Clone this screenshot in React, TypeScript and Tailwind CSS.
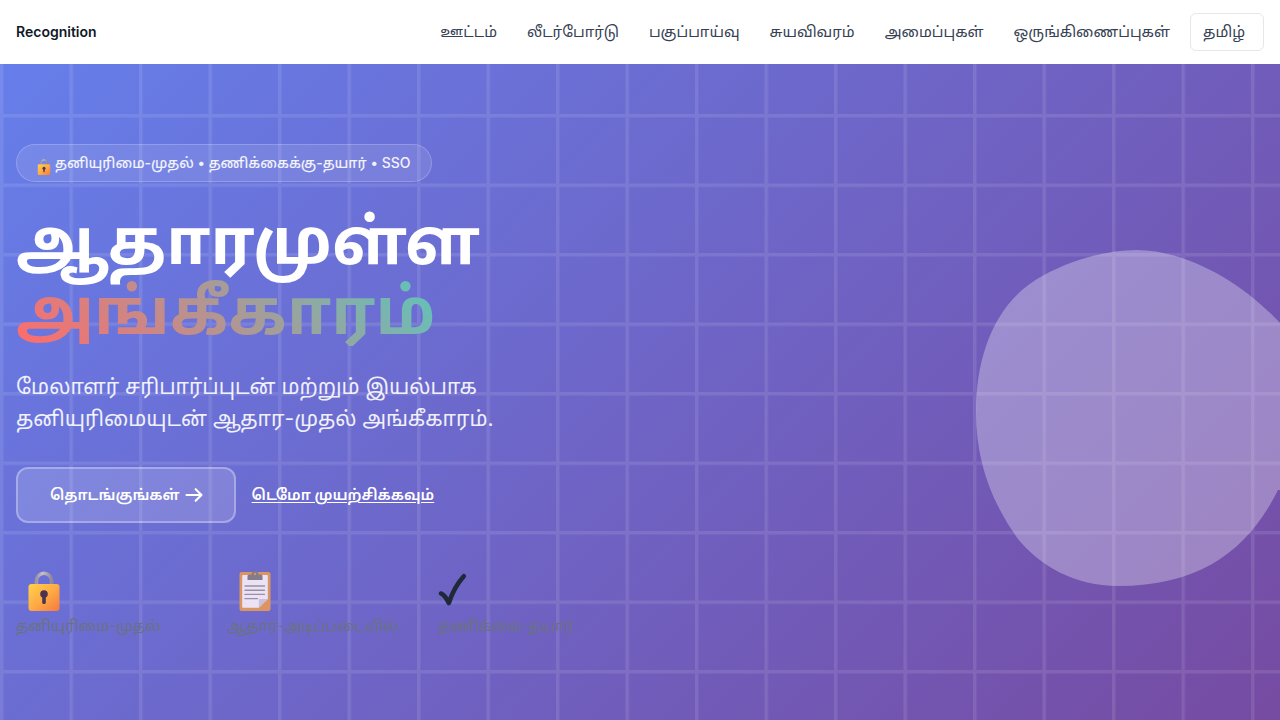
import { useState } from "react";

const links = ["ஊட்டம்", "லீடர்போர்டு", "பகுப்பாய்வு", "சுயவிவரம்", "அமைப்புகள்", "ஒருங்கிணைப்புகள்"];

function LockIcon({ className }: { className: string }) {
  return (
    <svg viewBox="0 0 32 40" className={className} aria-hidden="true">
      <defs>
        <linearGradient id="lockBody" x1="0" y1="0" x2="1" y2="1">
          <stop offset="0" stopColor="#ffd24a" />
          <stop offset="0.5" stopColor="#ffab45" />
          <stop offset="1" stopColor="#f4793f" />
        </linearGradient>
        <linearGradient id="lockShackle" x1="0" y1="0" x2="1" y2="0">
          <stop offset="0" stopColor="#9b93a6" />
          <stop offset="0.4" stopColor="#c6c0cb" />
          <stop offset="1" stopColor="#8f8898" />
        </linearGradient>
      </defs>
      <path d="M8.4 15V9.8a7.6 7.6 0 0 1 15.200 0V15" fill="none" stroke="url(#lockShackle)" strokeWidth="3.6" />
      <rect x="0.5" y="13" width="31" height="27" rx="3" fill="url(#lockBody)" />
      <circle cx="16" cy="23" r="3.8" fill="#4a3550" />
      <rect x="14.2" y="23" width="3.6" height="10" rx="1.6" fill="#4a3550" />
    </svg>
  );
}

function ClipboardIcon({ className }: { className: string }) {
  return (
    <svg viewBox="0 0 32 40" className={className} aria-hidden="true">
      <rect x="0.5" y="1" width="31" height="39" rx="2" fill="#dc9560" />
      <path d="M4 4h24a.8.8 0 0 1 .8.8V28l-9 8.8H4a.8.8 0 0 1-.8-.8V4.8A.8.8 0 0 1 4 4z" fill="#ebe2f5" />
      <path d="M28.8 28l-9 8.8V28.8a.8.8 0 0 1 .8-.8z" fill="#cabfdc" />
      <path d="M8.5 9V5a1.5 1.5 0 0 1 1.5-1.5h2.5A3.5 3.5 0 0 1 16 0 3.5 3.5 0 0 1 19.5 3.5H22A1.5 1.5 0 0 1 23.5 5V9z" fill="#837c8a" />
      <circle cx="16" cy="3" r="1.2" fill="#dc9560" />
      <path d="M6 15h19.5M6 19.2h19.5M6 23.4h19.5M6 27.6h12.5" stroke="#9a90a3" strokeWidth="1.4" strokeLinecap="round" />
    </svg>
  );
}

function CheckIcon({ className }: { className: string }) {
  return (
    <svg viewBox="0 0 32 40" className={className} aria-hidden="true">
      <path d="M3 22.5Q6.5 23.5 10.8 32Q16 16 25.8 5.2" fill="none" stroke="#1f2937" strokeWidth="4.6" strokeLinecap="round" strokeLinejoin="round" />
    </svg>
  );
}

function Backdrop() {
  return (
    <svg className="absolute inset-0 size-full" aria-hidden="true">
      <defs>
        <pattern id="grid" width="69.5" height="69.5" y="50" patternUnits="userSpaceOnUse">
          <path d="M0 1.7H69.5M1.7 0V69.5" stroke="#fff" strokeOpacity="0.1" strokeWidth="3.5" fill="none" />
        </pattern>
      </defs>
      <svg x="100%" overflow="visible">
        <path
          d="M-304 348C-304 290 -284 236 -236 211C-208 196 -174 186 -143 186C-98 186 -42 214 0 259V426H-2C-30 482 -75 522 -162 522C-205 522 -240 502 -262 475C-290 436 -304 395 -304 348Z"
          fill="#fff"
          fillOpacity="0.3"
        />
      </svg>
      <rect width="100%" height="100%" fill="url(#grid)" />
    </svg>
  );
}

const features = [
  { label: "தனியுரிமை-முதல்", Icon: LockIcon, place: "ml-3" },
  { label: "ஆதார-அடிப்படையில்", Icon: ClipboardIcon, place: "ml-3" },
  { label: "தணிக்கை-தயார்", Icon: CheckIcon, place: "ml-0" },
];

export default function App() {
  const [lang, setLang] = useState("ta");
  return (
    <div className="flex min-h-screen flex-col bg-white font-['Inter','Noto_Sans_Tamil',sans-serif] text-gray-800">
      <header className="flex h-16 items-center justify-between px-4">
        <a href="#home" className="text-sm font-semibold text-gray-900">Recognition</a>
        <div className="flex items-center gap-5">
          <nav className="flex items-center gap-[30px] text-[15px] text-gray-700">
            {links.map((l) => (
              <a key={l} href="#page" className="whitespace-nowrap">{l}</a>
            ))}
          </nav>
          <select
            aria-label="மொழி"
            value={lang}
            onChange={(e) => setLang(e.target.value)}
            className="h-[38px] w-[74px] appearance-none rounded-md border border-gray-200 bg-white px-3 text-[15px] text-gray-700"
          >
            <option value="ta">தமிழ்</option>
          </select>
        </div>
      </header>

      <main className="relative flex flex-1 flex-col justify-center overflow-hidden bg-linear-[135deg] from-[#667eea] to-[#764ba2] px-4 py-20">
        <Backdrop />
        <div className="relative flex flex-col items-start">
          <p className="flex h-[38px] items-center gap-1 rounded-full border border-white/20 bg-white/10 px-5 text-sm font-medium text-white/90">
            <LockIcon className="mt-2 h-4 w-[14px]" />
            <span>தனியுரிமை-முதல் • தணிக்கைக்கு-தயார் • SSO</span>
          </p>

          <h1 className="mt-6 pr-6 text-[64px] leading-[70px] font-bold text-white">
            <span className="block">ஆதாரமுள்ள</span>
            <span className="block bg-linear-[45deg] from-[#ff6b6b] to-[#4ecdc4] bg-clip-text text-transparent">அங்கீகாரம்</span>
          </h1>

          <p className="mt-[25px] max-w-[512px] text-[21px] leading-8 text-white/90">
            மேலாளர் சரிபார்ப்புடன் மற்றும் இயல்பாக தனியுரிமையுடன் ஆதார-முதல் அங்கீகாரம்.
          </p>

          <div className="mt-8 flex items-center gap-4 text-[15px] font-semibold text-white">
            <button type="button" className="flex h-14 items-center gap-1 rounded-xl border-2 border-white/30 bg-white/15 pr-[30px] pl-8">
              தொடங்குங்கள்
              <svg viewBox="0 0 24 24" className="size-5" fill="none" stroke="currentColor" strokeWidth="2.5" strokeLinecap="round" strokeLinejoin="round" aria-hidden="true">
                <path d="M14 5l7 7m0 0l-7 7m7-7H3" />
              </svg>
            </button>
            <a href="#demo" className="underline underline-offset-2">டெமோ முயற்சிக்கவும்</a>
          </div>

          <ul className="mt-12 grid grid-cols-3 gap-8">
            {features.map(({ label, Icon, place }) => (
              <li key={label} className="w-[179px]">
                <Icon className={`${place} h-10 w-8`} />
                <p className="text-[15px] leading-[29px] whitespace-nowrap text-gray-500">{label}</p>
              </li>
            ))}
          </ul>
        </div>
      </main>
    </div>
  );
}
